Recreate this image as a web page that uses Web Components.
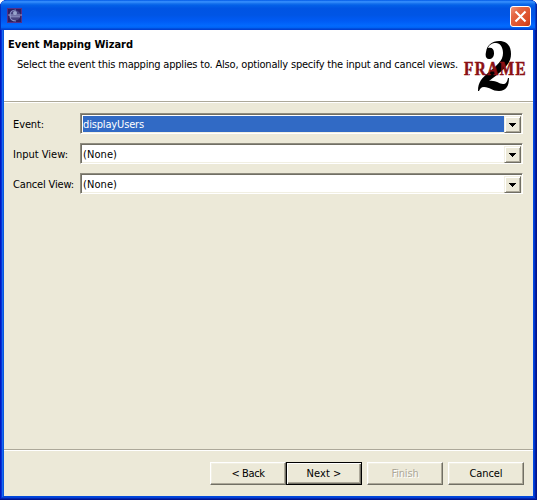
<!DOCTYPE html>
<html lang="en"><head><meta charset="utf-8"><title>Event Mapping Wizard</title>
<style>body{margin:0;background:#fff;font:11px/14px "DejaVu Sans Condensed","DejaVu Sans",sans-serif;color:#000}</style></head>
<body>
<wizard-window>
  <wizard-header slot="header">
    <fit-text slot="title" width="125" bold>Event Mapping Wizard</fit-text>
    <fit-text slot="description" width="441">Select the event this mapping applies to. Also, optionally specify the input and cancel views.</fit-text>
    <frame-logo slot="logo"></frame-logo>
  </wizard-header>
  <combo-row selected><fit-text slot="label" width="31">Event:</fit-text><fit-text width="61">displayUsers</fit-text></combo-row>
  <combo-row><fit-text slot="label" width="55">Input View:</fit-text><fit-text width="34">(None)</fit-text></combo-row>
  <combo-row><fit-text slot="label" width="61">Cancel View:</fit-text><fit-text width="34">(None)</fit-text></combo-row>
  <push-button slot="footer"><fit-text width="33">&lt; Back</fit-text></push-button>
  <push-button slot="footer" primary><fit-text width="35">Next &gt;</fit-text></push-button>
  <push-button slot="footer" disabled><fit-text width="27">Finish</fit-text></push-button>
  <push-button slot="footer"><fit-text width="33">Cancel</fit-text></push-button>
</wizard-window>
<script>
const define = (name, html, setup) => customElements.define(name, class extends HTMLElement {
  constructor() { super(); this.attachShadow({mode:'open'}).innerHTML = html; }
  connectedCallback() { if (setup) setup(this); }
});

// Tracks a run of text so that it fills the given width.
define('fit-text', `<style>
:host{display:block;white-space:nowrap;height:14px}
:host([bold]){font-family:"DejaVu Sans Condensed","DejaVu Sans",sans-serif;font-weight:bold}
span{display:inline-block}
</style><span><slot></slot></span>`, el => {
  const span = el.shadowRoot.querySelector('span');
  const want = +el.getAttribute('width');
  el.style.width = want + 'px';
  span.style.letterSpacing = (want - span.getBoundingClientRect().width) / el.textContent.length + 'px';
});

define('frame-logo', `<style>:host{display:block;width:70px;height:54px}svg{display:block;overflow:visible}</style>
<svg width="70" height="54" viewBox="0 0 70 54">
<path d="M25 11C26 4 31 0 38 0C46 0 50 5 50 13C50 24 40 31 28 40C35 39 38 43 42 43C45 43 46 41 47 37h1C48 45 45 50 38 50C31 50 29 46 23 46C20 46 19 48 18 50h-1C17 41 21 37 27 32C36 24 42 20 42 12C42 6 39 2 35 2C31 2 28 4 27 7C31 6 33 8 33 12C33 16 31 18 28 18C25 18 24 15 25 11z"/>
<text transform="translate(3 34) scale(.8 1)" font-family="Liberation Serif,serif" font-weight="bold" font-size="19" letter-spacing="1.9" fill="#8b1014" stroke="#8b1014" stroke-width=".6">FRAME</text>
<path d="M7.5 22v12M18.5 22v12M58.5 22v12" stroke="#fff" stroke-width=".6" opacity=".6"/>
</svg>`);

define('wizard-header', `<style>
:host{display:flex;justify-content:space-between;height:71px;background:#fff;border-bottom:1px solid #aca899;box-shadow:0 1px #fff;position:relative}
.copy{padding:8px 0 0 4px}.desc{margin:6px 0 0 9px}.logo{padding:11px 2px 0 0;margin-left:-6px}
</style><div class="copy"><slot name="title"></slot><div class="desc"><slot name="description"></slot></div></div><div class="logo"><slot name="logo"></slot></div>`);

define('combo-row', `<style>
:host{display:grid;grid-template-columns:67px 443px;height:20px;align-items:start}
::slotted([slot=label]){margin-top:4px}
.box{height:21px;box-sizing:border-box;display:flex;background:#fff;border:1px solid;border-color:#8f8c7f #fff #fff #8f8c7f;box-shadow:inset 1px 1px #716f64,inset -1px -1px #f1efe2;padding:2px 1px 2px 2px;margin-top:-1px}
.value{flex:1;height:15px;padding-top:1px}
.value{padding-top:2px;height:14px}
:host([selected]) .value{background:#316ac5;color:#fff}
.arrow{width:17px;height:17px;box-sizing:border-box;background:#ece9d8;border:1px solid;border-color:#f1efe2 #716f64 #716f64 #f1efe2;box-shadow:inset 1px 1px #fff,inset -1px -1px #aca899;display:grid;place-items:center}
svg{display:block}
</style><slot name="label"></slot><div class="box"><div class="value"><slot></slot></div><div class="arrow"><svg width="7" height="4" shape-rendering="crispEdges"><path d="M0 0h7v1h-1v1h-1v1h-1v1h-1v-1h-1v-1h-1v-1h-1z"/></svg></div></div>`);

define('push-button', `<style>
:host{display:flex;justify-content:center;align-items:center;width:76px;height:23px;box-sizing:border-box;background:#ece9d8;border:1px solid;border-color:#fff #716f64 #716f64 #fff;box-shadow:inset -1px -1px #aca899,inset 1px 1px #f1efe2}
:host([primary]){border-color:#000;box-shadow:inset 1px 1px #fff,inset -1px -1px #716f64,inset -2px -2px #aca899}
:host([disabled]){color:#aca899;text-shadow:1px 1px #fff;margin:0 5px}
</style><slot></slot>`);

define('wizard-window', `<style>
:host{display:flex;flex-direction:column;box-sizing:border-box;width:537px;height:500px;background:#ece9d8;padding:0 4px 4px;border-radius:7px 7px 0 0;overflow:hidden;box-shadow:inset 0 -1px #00138c,inset 1px 0 #0019bf,inset -1px 0 #00138c,inset 0 -2px #0026b0,inset 2px 0 #0831d9,inset -2px 0 #001ea0,inset 0 -3px #0441d8,inset 3px 0 #166aee,inset -3px 0 #0035cc,inset 0 -4px #0048dc,inset 4px 0 #0855dd,inset -4px 0 #0048e0}
.bar{flex:none;display:flex;justify-content:space-between;height:30px;margin:0 -4px;padding:6px 6px 0 7px;box-sizing:border-box;background:linear-gradient(#0058e6,#3a93ff 6%,#1a75ef 11%,#0361e8 17%,#0054e3 28%,#0055e5 50%,#005bf5 70%,#026afe 86%,#0062f5 92%,#0043cf 97%,#003dd7);box-shadow:inset 1px 0 #0030c0,inset -1px 0 #00209c,inset -2px 0 #003ccc}
.content{flex:1;display:flex;flex-direction:column;gap:10px;padding:12px 9px}
.footer{flex:none;display:flex;justify-content:flex-end;padding:12px 9px 0 0;box-sizing:border-box;border-top:1px solid #aca899;box-shadow:inset 0 1px #fff;height:47px}
svg{display:block}
</style>
<div class="bar">
<svg width="16" height="16" viewBox="0 0 16 16" style="margin-top:1px"><rect y="1" width="15" height="15" fill="#30205f"/><path d="M.5 1v15M14.500 1v15M0 1.500h15M0 15.500h15" stroke="#543088"/><circle cx="8.500" cy="8.500" r="5" fill="#484580"/><path d="M9 3C5 3 3 5 3 8.500S5 14 9 14" fill="none" stroke="#8790c4" stroke-width="1.200"/><circle cx="8" cy="6" r="2" fill="#98a5cc"/><path d="M1 8h14M3 9.800h10" stroke="#a9b2dc" stroke-width=".8"/></svg>
<svg width="21" height="21" viewBox="0 0 21 21"><defs><linearGradient id="g" x2="1" y2="1"><stop stop-color="#f09a82"/><stop offset=".3" stop-color="#e56643"/><stop offset=".8" stop-color="#da4822"/><stop offset="1" stop-color="#b5320e"/></linearGradient></defs><rect x=".5" y=".5" width="20" height="20" rx="2.5" fill="url(#g)" stroke="#fff"/><path d="M5.500 5.500l10 10m0-10l-10 10" stroke="#fff" stroke-width="2.100"/></svg>
</div><slot name="header"></slot><div class="content"><slot></slot></div><div class="footer"><slot name="footer"></slot></div>`);
</script></body></html>
